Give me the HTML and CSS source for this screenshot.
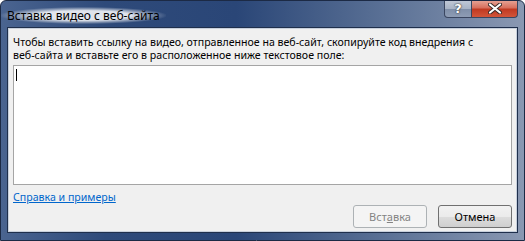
FILE: index.html
```html
<!DOCTYPE html>
<html lang="ru">
<head>
  <meta charset="UTF-8">
  <title>Вставка видео с веб-сайта</title>
  <link rel="stylesheet" href="styles.css">
</head>
<body>
  <div class="window">
    <!-- Title bar -->
    <div class="titlebar">
      <span class="title">Вставка видео с веб-сайта</span>
      <div class="caption-buttons">
        <button class="cap-help">?</button>
        <button class="cap-close">
          <svg width="14" height="11" viewBox="0 0 14 11">
            <path d="M2 1.5 L12 9.5 M12 1.5 L2 9.5" stroke="#3a2a28" stroke-width="4" stroke-linecap="round"/>
            <path d="M2 1.5 L12 9.5 M12 1.5 L2 9.5" stroke="#ffffff" stroke-width="2.2" stroke-linecap="round"/>
          </svg>
        </button>
      </div>
    </div>

    <!-- Dialog body -->
    <div class="client">
      <p class="intro">Чтобы вставить ссылку на видео, отправленное на веб-сайт, скопируйте код внедрения с веб-сайта и вставьте его в расположенное ниже текстовое поле:</p>
      <div class="embed-box"><span class="caret"></span></div>
      <a href="#help" class="help-link">Справка и примеры</a>
      <div class="actions">
        <button class="btn" disabled>Вст<u>а</u>вка</button>
        <button class="btn btn-default">Отмена</button>
      </div>
    </div>
  </div>
</body>
</html>
```

FILE: styles.css
```css
/* Basic Styles */
body {
  margin: 0;
  padding: 0;
  font-family: "Noto Sans", "Open Sans", sans-serif;
  font-size: 10.6px;
  background: #ffffff;
}

.window {
  width: 525px;
  height: 241px;
  box-sizing: border-box;
  border: 1px solid #1c2a45;
  border-radius: 6px 6px 0 0;
  background: linear-gradient(90deg, #4a6490 0%, #2e4a7a 20%, #2a4677 45%, #5d7397 75%, #8a98b2 100%);
  display: flex;
  flex-direction: column;
  overflow: hidden;
}

/* Title bar */
.titlebar {
  height: 26px;
  flex-shrink: 0;
  display: flex;
  justify-content: space-between;
  align-items: flex-start;
  padding-left: 6px;
  padding-right: 6px;
}

.title {
  margin-top: 6px;
  font-size: 12px;
  color: #000;
  background: radial-gradient(ellipse at center, rgba(255,255,255,0.85) 40%, rgba(255,255,255,0) 72%);
  padding: 0 6px;
  margin-left: -6px;
}

.caption-buttons {
  display: flex;
  margin-top: -1px;
}

.caption-buttons button {
  height: 18px;
  border: 1px solid #3a4660;
  border-top: none;
  padding: 0;
  margin: 0;
  display: flex;
  align-items: center;
  justify-content: center;
}

.cap-help {
  width: 28px;
  border-radius: 0 0 0 4px;
  background: linear-gradient(#c2cad8 0%, #a9b4c6 50%, #7e8ea8 52%, #8e9cb4 100%);
  color: #fff;
  font-family: "DejaVu Sans", sans-serif;
  font-weight: bold;
  font-size: 13px;
  text-shadow: 0 0 2px #333, 0 0 1px #333;
}

.cap-close {
  width: 46px;
  border-left: none !important;
  border-radius: 0 0 4px 0;
  background: linear-gradient(#e8a89a 0%, #d8705e 45%, #c13a22 55%, #d2553a 100%);
}

/* Client area */
.client {
  flex: 1;
  min-height: 0;
  margin: 0 6px 7px 6px;
  border: 1px solid #1f2f4c;
  box-shadow: inset 0 0 0 1px #c8d0dc;
  background: #f0f0f0;
  padding: 8px 5px 0 5px;
  display: flex;
  flex-direction: column;
}

.intro {
  margin: 0;
  padding-right: 20px;
  line-height: 13px;
  color: #000;
}

.embed-box {
  margin-top: 3px;
  height: 120px;
  box-sizing: border-box;
  flex-shrink: 0;
  border: 1px solid #a5a5a5;
  background: #fff;
  padding: 3px 2px;
}

.caret {
  display: block;
  width: 1px;
  height: 12px;
  background: #000;
}

.help-link {
  margin-top: 5px;
  line-height: 14px;
  color: #0066cc;
  align-self: flex-start;
}

.actions {
  margin-top: 1px;
  display: flex;
  justify-content: flex-end;
  gap: 11px;
}

.btn {
  width: 74px;
  height: 23px;
  font-family: inherit;
  font-size: 11px;
  border: 1px solid #707070;
  border-radius: 3px;
  background: linear-gradient(#f2f2f2 0%, #ebebeb 50%, #dddddd 51%, #cfcfcf 100%);
  color: #000;
  padding: 0;
}

.btn:disabled {
  border-color: #adb2b5;
  background: #f4f4f4;
  color: #838383;
}
```
